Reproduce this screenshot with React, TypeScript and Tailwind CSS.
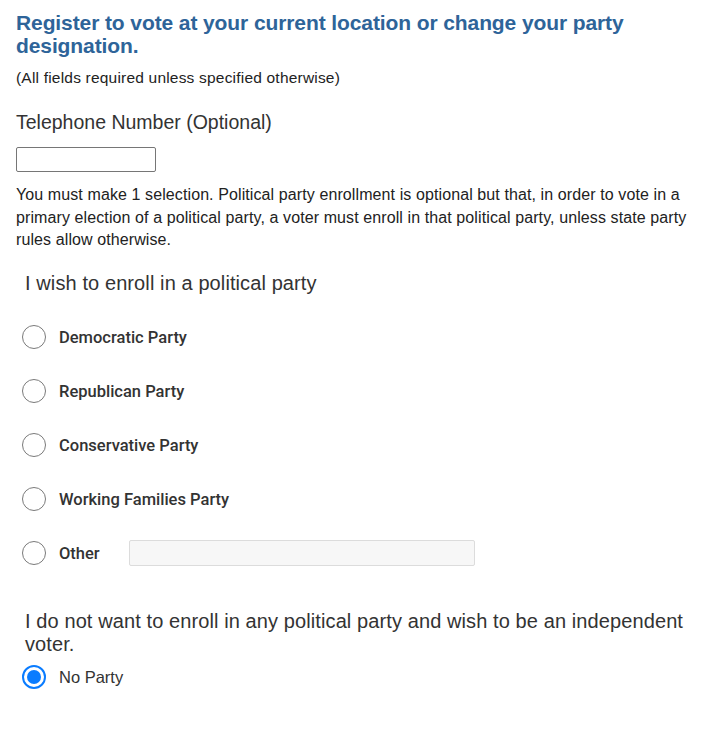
import React from "react";

const parties = [
  "Democratic Party",
  "Republican Party",
  "Conservative Party",
  "Working Families Party",
];

// Plain gray ring, as the browser draws an unchecked radio.
function Radio({ checked = false }: { checked?: boolean }) {
  if (checked) {
    return (
      <span className="flex h-6 w-6 shrink-0 items-center justify-center rounded-full border-2 border-[#0a7cff] bg-white">
        <span className="h-[14px] w-[14px] rounded-full bg-[#0a7cff]" />
      </span>
    );
  }
  return <span className="h-6 w-6 shrink-0 rounded-full border-[1.5px] border-[#7a7a7a] bg-white" />;
}

const labelFont = { fontFamily: 'Roboto, "Liberation Sans", sans-serif' };

export default function App() {
  return (
    <div
      className="min-h-[729px] bg-white px-4 pt-[11px] text-[#333]"
      style={{ fontFamily: '"Liberation Sans", Arial, sans-serif' }}
    >
      <h1 className="text-[21px] font-bold leading-[23px] tracking-[-0.1px] text-[#2e6499]">
        Register to vote at your current location or change your party designation.
      </h1>
      <p className="mt-[11px] text-[15.5px] leading-[20px] tracking-[0.2px] text-[#222]">
        (All fields required unless specified otherwise)
      </p>

      <label className="mt-[23px] block text-[19.5px] leading-[22px]">Telephone Number (Optional)</label>
      <input
        type="text"
        className="mt-[14px] block h-[25px] w-[140px] rounded-[2px] border border-[#767676] bg-white"
      />

      <p className="-mr-[8px] mt-[12px] text-[16px] leading-[22.5px] tracking-[0.1px] text-[#222]">
        You must make 1 selection. Political party enrollment is optional but that, in order to vote in a
        primary election of a political party, a voter must enroll in that political party, unless state
        party rules allow otherwise.
      </p>

      <h2 className="ml-[9px] mt-[20px] text-[20px] leading-[22px] tracking-[0.1px]">
        I wish to enroll in a political party
      </h2>

      <div className="mt-[16px] flex flex-col">
        {parties.map((p) => (
          <div key={p} className="ml-[6px] flex h-[54px] items-center gap-[13px]">
            <Radio />
            <span className="mt-[3px] text-[16.5px] font-medium text-[#333]" style={labelFont}>
              {p}
            </span>
          </div>
        ))}
        <div className="ml-[6px] flex h-[54px] items-center gap-[13px]">
          <Radio />
          <span className="mt-[3px] w-[57px] text-[16.5px] font-medium text-[#333]" style={labelFont}>
            Other
          </span>
          <input
            type="text"
            className="h-[26px] w-[346px] rounded-[2px] border border-[#dcdcdc] bg-[#f7f7f7]"
          />
        </div>
      </div>

      <h2 className="ml-[9px] mt-[30px] text-[20px] leading-[23px] tracking-[0.1px]">
        I do not want to enroll in any political party and wish to be an independent voter.
      </h2>
      <div className="ml-[6px] mt-[9px] flex h-6 items-center gap-[13px]">
        <Radio checked />
        <span className="mt-[2px] text-[16.5px] text-[#333]">No Party</span>
      </div>
    </div>
  );
}
